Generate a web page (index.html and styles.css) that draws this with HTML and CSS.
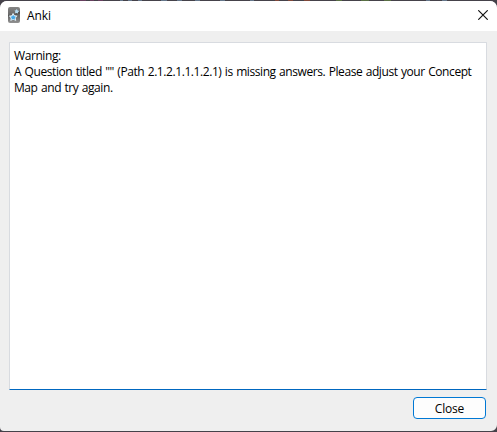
FILE: index.html
```html
<!DOCTYPE html>
<html lang="en">
<head>
<meta charset="utf-8">
<title>Anki</title>
<link rel="stylesheet" href="styles.css">
</head>
<body>
<div class="window">
  <header class="titlebar">
    <svg class="app-icon" width="12" height="16" viewBox="0 0 12 16">
      <defs><linearGradient id="g" x1="0" y1="0" x2="0" y2="1"><stop offset="0" stop-color="#858585"/><stop offset=".55" stop-color="#666"/><stop offset="1" stop-color="#929292"/></linearGradient></defs>
      <rect width="12" height="16" rx="2" fill="url(#g)"/>
      <path d="M0 8Q6 8 12 4V7Q7 9 0 9Z" fill="#555"/>
      <path d="M8.8 1.8L9.6 3.6L11.2 3.9L10 5.2L10 6.6L8.6 6L7 6.3L7.3 4.8L6.5 3.5L8 3.3Z" fill="#b5dcf3"/>
      <path d="M5 5.8L6.6 8.3L9.6 8.8L7.7 11L8.2 14L5.3 12.8L2.4 14.1L2.7 11L.8 8.8L3.7 8.2Z" fill="#e5f3fb"/>
      <path d="M5.1 7.7L6.2 9.3L8 9.7L6.8 11.2L7 12.7L5.2 12L3.5 12.8L3.7 11L2.5 9.7L4.3 9.3Z" fill="#45a8e8"/>
    </svg>
    <h1 class="title">Anki</h1>
    <svg class="close-icon" width="10" height="10" viewBox="0 0 10 10"><path d="M.3 .3L9.7 9.7M9.7 .3L.3 9.7" stroke="#111" stroke-width="1.15"/></svg>
  </header>
  <main class="content">
    <div class="message"><div>Warning:</div><div>A Question titled "" (Path 2.1.2.1.1.1.2.1) is missing answers. Please adjust your Concept</div><div>Map and try again.</div></div>
    <footer class="actions"><button class="close-button">Close</button></footer>
  </main>
</div>
</body>
</html>
```
FILE: styles.css
```css
* { box-sizing: border-box; }
body {
  margin: 0;
  height: 432px;
  padding: 1px 0;
  overflow: hidden;
  background:
    linear-gradient(90deg, transparent 80px, #67405f 80px 86px, transparent 86px 90px, #67405f 90px 94px, transparent 94px 98px, #67405f 98px 103px, transparent 103px 120px, #65768a 120px 123px, transparent 123px 128px, #65768a 128px 132px, transparent 132px 138px, #65768a 138px 142px, transparent 142px 161px, #65768a 161px 167px, transparent 167px 177px, #65768a 177px 182px, transparent 182px 195px, #65768a 195px 200px, transparent 200px 220px, #65768a 220px 225px, transparent 225px 250px, #65768a 250px 254px, transparent 254px 275px, #80483a 275px 279px, transparent 279px 288px, #80483a 288px 293px, transparent 293px 304px, #80483a 304px 310px, transparent 310px 336px, #596f44 336px 342px, transparent 342px 361px, #596f44 361px 369px, transparent 369px 384px, #596f44 384px 391px, transparent 391px 426px, #65768a 426px 430px, transparent 430px 442px, #65768a 442px 447px, transparent 447px) 0 0 / 497px 1px no-repeat,
    #45424a;
  font: 12px/16px "Open Sans", "Noto Sans", sans-serif;
  color: #000;
}
.window {
  display: flex;
  flex-direction: column;
  height: 430px;
  border-radius: 7px 7px 6px 4px;
  overflow: hidden;
  background: #efefef;
}
.titlebar {
  display: flex;
  align-items: center;
  flex: 0 0 30px;
  padding: 0 9px 2px 8px;
  background: #fff;
}
.title {
  margin: 0 auto 0 7px;
  padding-top: 2px;
  font: inherit;
  letter-spacing: -.1px;
}
.content {
  display: flex;
  flex-direction: column;
  flex: 1;
  padding: 11px 10px 0 9px;
}
.message {
  height: 348px;
  padding: 5px 4px;
  border: 1px solid #d8dbe0;
  border-bottom-color: #0067c0;
  border-radius: 1px;
  background: #fff;
  white-space: nowrap;
  letter-spacing: -.42px;
  word-spacing: .7px;
}
.actions { display: flex; justify-content: flex-end; padding-top: 7px; }
.close-button {
  width: 73px;
  height: 22px;
  margin-right: 1px;
  padding: 2px 0 0;
  border: 1px solid #0078d4;
  border-radius: 4px;
  background: #fdfdfd;
  color: #000;
  font: inherit;
  letter-spacing: -.2px;
}
```
